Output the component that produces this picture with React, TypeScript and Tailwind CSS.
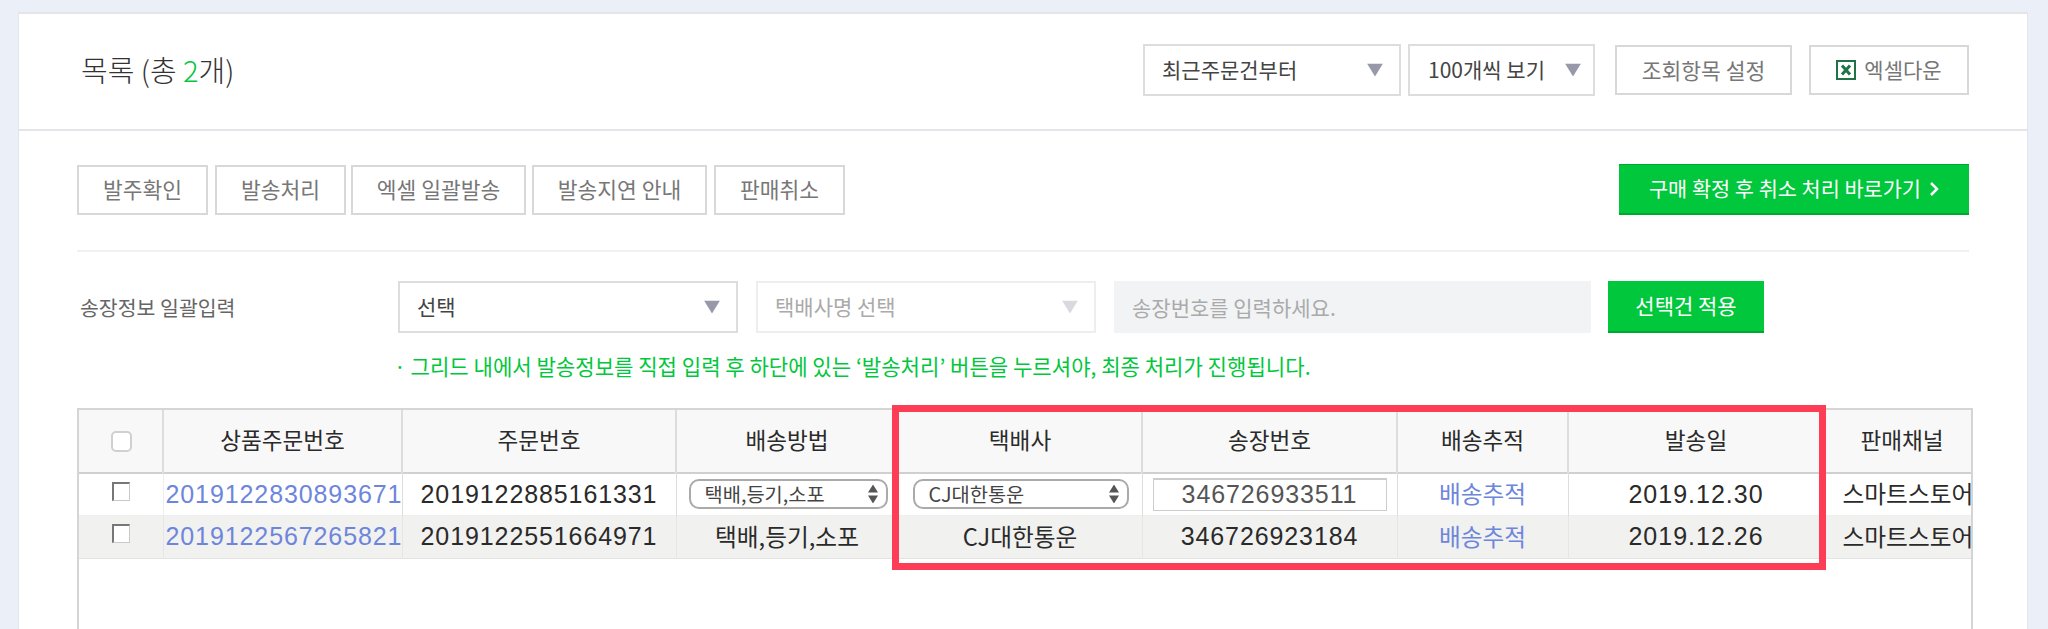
const font = "font-['Noto_Sans_CJK_KR','Liberation_Sans',sans-serif]";

const Arrow = ({ light }: { light?: boolean }) => (
	<svg width="16" height="13" viewBox="0 0 16 13" className="absolute right-[16px] top-1/2 -translate-y-1/2">
		<path d="M0 0H16L8 13Z" fill={light ? '#d8dae0' : '#9799a9'} />
	</svg>
);

const UpDown = () => (
	<svg width="12" height="19" viewBox="0 0 12 19" className="absolute right-[7px] top-1/2 -translate-y-1/2">
		<path d="M6 0L11 8H1Z" fill="#555" />
		<path d="M6 19L1 11H11Z" fill="#555" />
	</svg>
);

const GrayButton = ({ label, className }: { label: string; className: string }) => (
	<button className={`h-[50px] border-2 border-[#d8d8d8] bg-white text-[21.5px] text-[#777] ${className}`}>
		{label}
	</button>
);

const FakeSelect = ({ label, className, light }: { label: string; className: string; light?: boolean }) => (
	<div
		className={`relative flex h-[52px] items-center border-2 bg-white text-[21px] ${
			light ? 'border-[#eeeeee] text-[#aaaaaa]' : 'border-[#dddddd] text-[#444]'
		} ${className}`}
	>
		{label}
		<Arrow light={light} />
	</div>
);

const RowSelect = ({ label, className }: { label: string; className: string }) => (
	<div
		className={`relative flex h-[30px] items-center rounded-[10px] border-2 border-[#aaaaaa] bg-white pl-[14px] text-[19.8px] leading-none text-[#444] ${className}`}
	>
		{label}
		<UpDown />
	</div>
);

const RowCheck = () => (
	<div className="mx-auto mb-[6px] ml-[33px] h-[19px] w-[18px] border border-t-2 border-l-2 border-[#c9c9c9] border-t-[#777] border-l-[#777] bg-white" />
);

const headers = ['상품주문번호', '주문번호', '배송방법', '택배사', '송장번호', '배송추적', '발송일', '판매채널'];

const App = () => {
	return (
		<div className={`${font} h-[629px] overflow-hidden bg-[#ebeff7] pl-[18px] pr-[20px] pt-[12px]`}>
			<div className="h-[640px] border-t-2 border-r border-l border-[#e3e5e9] bg-white">
				<div className="flex h-[117px] items-center justify-between border-b-2 border-[#e3e5e9] pr-[58px] pb-[3px] pl-[62px]">
					<h1 className="text-[29px] font-light text-[#333]">
						목록 (총 <span className="text-[#00c73c]">2</span>개)
					</h1>
					<div className="flex items-center">
						<FakeSelect label="최근주문건부터" className="w-[258px] pl-[17px]" />
						<FakeSelect label="100개씩 보기" className="ml-[7px] w-[187px] pl-[18px] [&>svg]:right-[12px]" />
						<GrayButton label="조회항목 설정" className="ml-[20px] w-[177px]" />
						<button className="ml-[17px] flex h-[50px] w-[160px] items-center justify-center gap-[8px] border-2 border-[#d8d8d8] bg-white text-[21px] text-[#777]">
							<svg width="20" height="20" viewBox="0 0 20 20">
								<rect x="1" y="1" width="18" height="18" fill="#fff" stroke="#217346" strokeWidth="2" />
								<path d="M6 5.5L14 14.5M14 5.5L6 14.5" stroke="#217346" strokeWidth="3" />
							</svg>
							엑셀다운
						</button>
					</div>
				</div>

				<div className="px-[58px]">
					<div className="flex items-center justify-between border-b-2 border-[#f0f1f3] pt-[33px] pb-[35px]">
						<div className="flex gap-[6px]">
							<GrayButton label="발주확인" className="w-[131px]" />
							<GrayButton label="발송처리" className="ml-px w-[131px]" />
							<GrayButton label="엑셀 일괄발송" className="-ml-px w-[175px]" />
							<GrayButton label="발송지연 안내" className="w-[175px]" />
							<GrayButton label="판매취소" className="ml-px w-[131px]" />
						</div>
						<button className="flex h-[51px] w-[350px] items-center justify-center gap-[8px] border-t border-b-2 border-[#00a832] bg-[#00c73c] text-[20.8px] text-white">
							구매 확정 후 취소 처리 바로가기
							<svg width="10" height="14" viewBox="0 0 10 14" fill="none">
								<path d="M2 1L8 7L2 13" stroke="#fff" strokeWidth="2.5" />
							</svg>
						</button>
					</div>

					<div className="mt-[29px] flex items-center">
						<span className="w-[321px] pl-[3px] text-[20.5px] text-[#666]">송장정보 일괄입력</span>
						<FakeSelect label="선택" className="w-[340px] pl-[17px]" />
						<FakeSelect label="택배사명 선택" light className="ml-[18px] w-[340px] pl-[17px]" />
						<input
							readOnly
							placeholder="송장번호를 입력하세요."
							className="ml-[18px] h-[52px] w-[477px] bg-[#f1f3f5] pl-[18px] text-[21px] placeholder:text-[#aaaaaa]"
						/>
						<button className="ml-[17px] h-[52px] w-[156px] border-b-2 border-[#00a832] bg-[#00c73c] text-[21px] text-white">
							선택건 적용
						</button>
					</div>

					<p className="mt-[20px] pl-[317px] text-[21.1px] leading-[26px] text-[#00c73c]">
						· 그리드 내에서 발송정보를 직접 입력 후 하단에 있는 ‘발송처리’ 버튼을 누르셔야, 최종 처리가 진행됩니다.
					</p>

					<div className="relative mt-[29px] h-[240px] w-[1896px] border-t-2 border-r-2 border-l-2 border-[#d5d5d5]">
						<div className="overflow-hidden">
							<table className="w-[1901px] table-fixed border-collapse text-[#2a2a2a]">
								<colgroup>
									<col className="w-[84px]" />
									<col className="w-[239px]" />
									<col className="w-[274px]" />
									<col className="w-[222px]" />
									<col className="w-[244px]" />
									<col className="w-[255px]" />
									<col className="w-[171px]" />
									<col className="w-[256px]" />
									<col className="w-[156px]" />
								</colgroup>
								<thead>
									<tr className="h-[63px] border-b-2 border-[#d0d0d0] bg-[#f8f8f8] text-[22.6px]">
										<th className="border-r-2 border-[#dddddd] font-normal">
											<div className="ml-[32px] h-[21px] w-[21px] rounded-[5px] border-2 border-[#d0d0d0] bg-white" />
										</th>
										{headers.map((header) => (
											<th key={header} className="border-r-2 border-[#dddddd] pb-[3px] font-normal">
												{header}
											</th>
										))}
									</tr>
								</thead>
								<tbody className="text-[23.7px]">
									<tr className="h-[42px] border-b border-[#eeeeee]">
										<td className="border-r border-[#eeeeee]"><RowCheck /></td>
										<td className="border-r border-[#dddddd] pl-[2px] font-['Liberation_Sans'] text-[25px] tracking-[0.9px] whitespace-nowrap text-[#6d86dc]">2019122830893671</td>
										<td className="border-r border-[#dddddd] text-center font-['Liberation_Sans'] text-[25px] tracking-[0.9px]">2019122885161331</td>
										<td className="border-r border-[#dddddd]"><RowSelect label="택배,등기,소포" className="ml-[12px] w-[199px]" /></td>
										<td className="border-r border-[#dddddd]"><RowSelect label="CJ대한통운" className="ml-[14px] w-[216px]" /></td>
										<td className="border-r border-[#dddddd]">
											<input
												readOnly
												value="346726933511"
												className="ml-[10px] h-[33px] w-[234px] border border-t-2 border-[#cccccc] text-center font-['Liberation_Sans'] text-[25px] tracking-[0.9px] text-[#555]"
											/>
										</td>
										<td className="border-r border-[#dddddd] text-center text-[#6d86dc]">배송추적</td>
										<td className="border-r border-[#dddddd] text-center font-['Liberation_Sans'] text-[25px] tracking-[1px]">2019.12.30</td>
										<td className="pl-[18px] whitespace-nowrap">스마트스토어</td>
									</tr>
									<tr className="h-[43px] border-b border-[#e3e3e3] bg-[#f1f1ef]">
										<td className="border-r border-[#e6e6e6]"><RowCheck /></td>
										<td className="border-r border-[#e6e6e6] pl-[2px] font-['Liberation_Sans'] text-[25px] tracking-[0.9px] whitespace-nowrap text-[#6d86dc]">2019122567265821</td>
										<td className="border-r border-[#e6e6e6] text-center font-['Liberation_Sans'] text-[25px] tracking-[0.9px]">2019122551664971</td>
										<td className="border-r border-[#e6e6e6] text-center">택배,등기,소포</td>
										<td className="border-r border-[#e6e6e6] text-center">CJ대한통운</td>
										<td className="border-r border-[#e6e6e6] text-center font-['Liberation_Sans'] text-[25px] tracking-[0.9px]">346726923184</td>
										<td className="border-r border-[#e6e6e6] text-center text-[#6d86dc]">배송추적</td>
										<td className="border-r border-[#e6e6e6] text-center font-['Liberation_Sans'] text-[25px] tracking-[1px]">2019.12.26</td>
										<td className="pl-[18px] whitespace-nowrap">스마트스토어</td>
									</tr>
								</tbody>
							</table>
						</div>
						<div className="absolute top-[-5px] left-[813px] h-[165px] w-[934px] border-[7px] border-[#fc3d55]" />
					</div>
				</div>
			</div>
		</div>
	);
};

export default App;
